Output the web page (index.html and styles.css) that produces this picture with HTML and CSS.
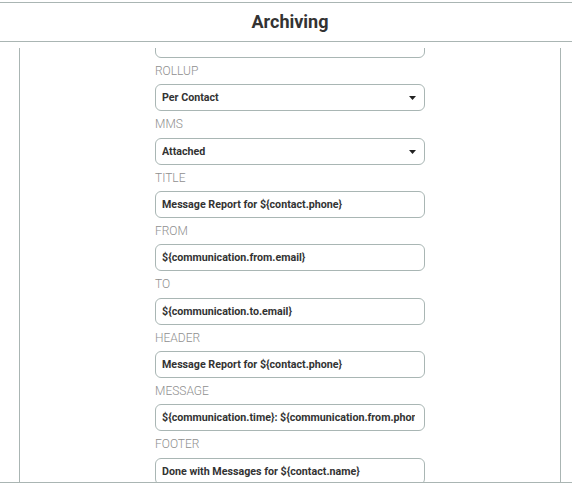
FILE: index.html
```html
<!DOCTYPE html>
<html lang="en">
<head>
<meta charset="utf-8">
<title>Archiving</title>
<link rel="stylesheet" href="styles.css">
</head>
<body>
<div class="frame">
  <header class="header">
    <h1 class="title">Archiving</h1>
  </header>
  <div class="body">
    <div class="panel">
      <form class="form">
        <div class="field field-first">
          <input class="control" type="text" value="">
        </div>
        <div class="field">
          <label class="label">Rollup</label>
          <div class="select-wrap">
            <select class="control select"><option>Per Contact</option></select>
            <svg class="caret" width="7" height="4" viewBox="0 0 7 4"><path d="M0 0h7L3.5 4z" fill="#222"/></svg>
          </div>
        </div>
        <div class="field">
          <label class="label">MMS</label>
          <div class="select-wrap">
            <select class="control select"><option>Attached</option></select>
            <svg class="caret" width="7" height="4" viewBox="0 0 7 4"><path d="M0 0h7L3.5 4z" fill="#222"/></svg>
          </div>
        </div>
        <div class="field">
          <label class="label">Title</label>
          <input class="control" type="text" value="Message Report for ${contact.phone}">
        </div>
        <div class="field">
          <label class="label">From</label>
          <input class="control" type="text" value="${communication.from.email}">
        </div>
        <div class="field">
          <label class="label">To</label>
          <input class="control" type="text" value="${communication.to.email}">
        </div>
        <div class="field">
          <label class="label">Header</label>
          <input class="control" type="text" value="Message Report for ${contact.phone}">
        </div>
        <div class="field">
          <label class="label">Message</label>
          <input class="control" type="text" value="${communication.time}: ${communication.from.phone}: ${communication.body}">
        </div>
        <div class="field">
          <label class="label">Footer</label>
          <input class="control" type="text" value="Done with Messages for ${contact.name}">
        </div>
      </form>
    </div>
  </div>
</div>
</body>
</html>
```

FILE: styles.css
```css
html, body {
  margin: 0;
  padding: 0;
  background: #fff;
}

body {
  font-family: Roboto, "Liberation Sans", sans-serif;
  color: #333;
}

.frame {
  margin-top: 2px;
  border-top: 1px solid #aab5b3;
}

.header {
  height: 38px;
  border-bottom: 1px solid #aab5b3;
  display: flex;
  align-items: center;
  justify-content: center;
  padding-left: 8px;
}

.title {
  margin: 0;
  font-size: 18px;
  font-weight: 700;
  color: #333;
  line-height: 1;
}

.body {
  height: 441px;
  box-sizing: border-box;
  padding-top: 6px;
  border-bottom: 1px solid #aab5b3;
}

.panel {
  height: 100%;
  margin: 0 11px 0 19px;
  border-left: 1px solid #aab5b3;
  border-right: 1px solid #aab5b3;
  overflow: hidden;
}

.form {
  width: 270px;
  margin: -17px auto 0;
}

.field {
  display: flex;
  flex-direction: column;
}

.label {
  display: block;
  margin-top: 6px;
  margin-bottom: 6.33px;
  height: 14px;
  font-size: 12px;
  line-height: 14px;
  font-weight: 300;
  color: #8f8f8f;
  text-transform: uppercase;
}

.control {
  box-sizing: border-box;
  width: 270px;
  height: 27px;
  margin: 0;
  padding: 0 9px 0 6px;
  border: 1px solid #a9b6b4;
  border-radius: 6px;
  background: #fff;
  font-family: Roboto, "Liberation Sans", sans-serif;
  font-size: 10.7px;
  font-weight: 700;
  color: #333;
  outline: none;
}

.select-wrap {
  position: relative;
}

.select {
  appearance: none;
  -webkit-appearance: none;
  padding-right: 24px;
}

.caret {
  position: absolute;
  right: 9px;
  top: 12px;
  pointer-events: none;
}
```
